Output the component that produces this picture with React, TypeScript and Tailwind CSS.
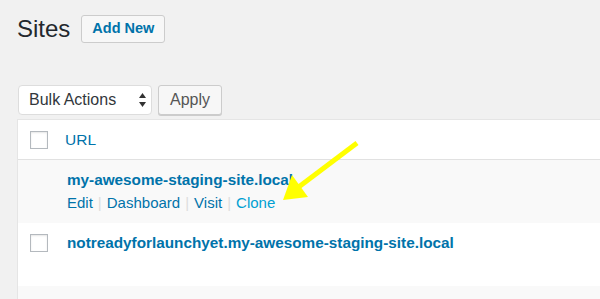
import React from "react";

function Checkbox() {
  return (
    <div className="w-[18px] h-[18px] border border-[#b4b9be] bg-white shadow-[inset_0_1px_2px_rgba(0,0,0,0.1)] shrink-0" />
  );
}

export default function App() {
  return (
    <div
      className="relative w-[600px] h-[299px] overflow-hidden bg-[#f1f1f1] text-[#32373c]"
      style={{ fontFamily: '"Liberation Sans", Arial, sans-serif' }}
    >
      <div className="pl-[17px] pt-[15px] flex items-center h-[43px]">
        <h1 className="text-[24px] leading-[28px] text-[#23282d] font-normal">Sites</h1>
        <div className="ml-[11px] w-[84px] h-[28px] flex items-center justify-center border border-[#cccccc] bg-[#f7f7f7] rounded-[3px] text-[14.5px] font-bold text-[#0073aa]">
          Add New
        </div>
      </div>

      <div className="mt-[42px] pl-[18px] flex items-start h-[30px]">
        <div className="w-[134px] h-[30px] flex items-center justify-between border border-[#dddddd] bg-white rounded-[4px] pl-[10px] pr-[5px] text-[16px] text-[#32373c]">
          <span>Bulk Actions</span>
          <svg width="7" height="14" viewBox="0 0 7 14">
            <path d="M3.5 0 L7 5 L0 5 Z" fill="#333" />
            <path d="M3.5 14 L7 9 L0 9 Z" fill="#333" />
          </svg>
        </div>
        <div className="ml-[6px] w-[64px] h-[30px] flex items-center justify-center border border-[#cccccc] bg-[#f7f7f7] rounded-[3px] shadow-[0_1px_0_#cccccc] text-[16px] text-[#555555]">
          Apply
        </div>
      </div>

      <div className="mt-[4px] ml-[17px] w-[640px] border border-[#e5e5e5] bg-white">
        <div className="h-[40px] flex items-center border-b border-[#e1e1e1] pl-[12px]">
          <Checkbox />
          <span className="ml-[17px] text-[15.5px] text-[#0073aa]">URL</span>
        </div>
        <div className="h-[63px] bg-[#f9f9f9] pl-[49px] pt-[10px]">
          <div className="text-[15.3px] leading-[20px] font-bold text-[#0073aa]">
            my-awesome-staging-site.local
          </div>
          <div className="mt-[3px] text-[15px] leading-[20px] flex items-center">
            <span className="text-[#0073aa]">Edit</span>
            <span className="text-[#dddddd] mx-[5px]">|</span>
            <span className="text-[#0073aa]">Dashboard</span>
            <span className="text-[#dddddd] mx-[5px]">|</span>
            <span className="text-[#0073aa]">Visit</span>
            <span className="text-[#dddddd] mx-[5px]">|</span>
            <span className="text-[#00a0d2]">Clone</span>
          </div>
        </div>
        <div className="h-[63px] bg-white pl-[12px] pt-[11px] flex items-start">
          <Checkbox />
          <div className="ml-[19px] -mt-[1px] text-[15.3px] leading-[20px] font-bold text-[#0073aa]">
            notreadyforlaunchyet.my-awesome-staging-site.local
          </div>
        </div>
        <div className="h-[40px] bg-[#f9f9f9]" />
      </div>

      <svg className="absolute left-0 top-0 pointer-events-none" width="600" height="299">
        <line x1="357" y1="143" x2="296" y2="189" stroke="#ffff00" strokeWidth="5" />
        <polygon points="283,200 292,175 308,197" fill="#ffff00" />
      </svg>
    </div>
  );
}
